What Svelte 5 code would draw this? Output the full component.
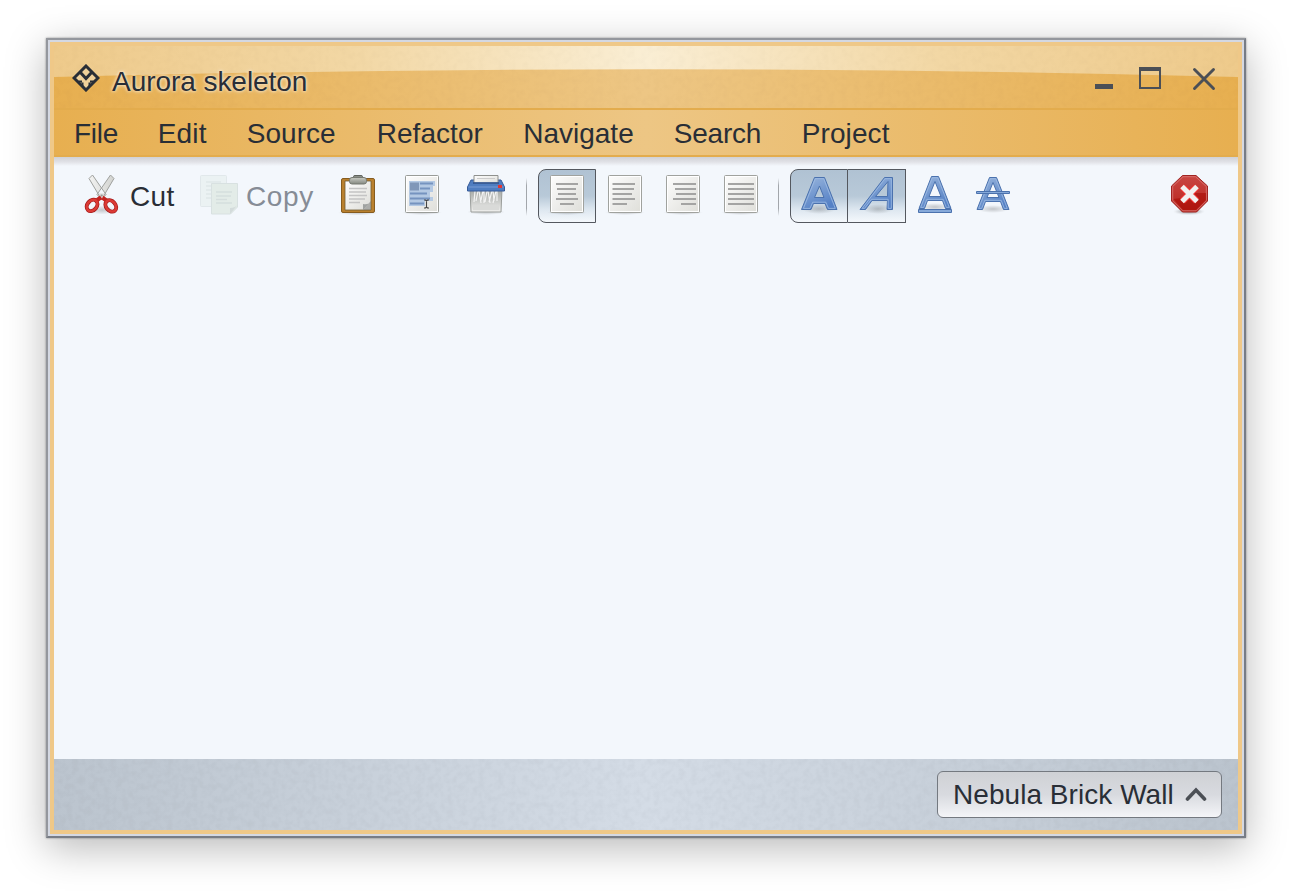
<script>
  const menus = [
    { label: 'File', w: 83.7, ls: -0.3 },
    { label: 'Edit', w: 89, ls: 0.2 },
    { label: 'Source', w: 130, ls: 0.05 },
    { label: 'Refactor', w: 146.5, ls: 0.05 },
    { label: 'Navigate', w: 150.5, ls: 0 },
    { label: 'Search', w: 128, ls: -0.2 },
    { label: 'Project', w: 90, ls: 0.1 }
  ];
  const pages = [
    { on: true, lines: [[12, 34], [13, 32], [14, 32], [12, 34], [16, 30]] },
    { on: false, lines: [[10.5, 33], [10.5, 32], [10.5, 30], [10.5, 33], [10.5, 25]] },
    { on: false, lines: [[13, 36], [15, 36], [16, 36], [13, 36], [21, 36]] },
    { on: false, lines: [[10, 36], [10, 36], [10, 36], [10, 36], [10, 36]] }
  ];
</script>

<svg class="defs" width="0" height="0" aria-hidden="true">
  <defs>
    <linearGradient id="paper" x1="0" y1="0" x2="1" y2="1"><stop offset="0" stop-color="#fdfdfd" /><stop offset="1" stop-color="#deded9" /></linearGradient>
    <linearGradient id="blue" x1="0" y1="0" x2=".5" y2="1"><stop offset="0" stop-color="#9ab6dc" /><stop offset="1" stop-color="#5581c6" /></linearGradient>
    <radialGradient id="shade"><stop offset="0" stop-color="#000" stop-opacity=".2" /><stop offset="1" stop-color="#000" stop-opacity="0" /></radialGradient>
    <linearGradient id="red" x1="0" y1="0" x2="0" y2="1"><stop offset="0" stop-color="#c94743" /><stop offset="1" stop-color="#b8241c" /></linearGradient>
    <linearGradient id="blade" x1="0" y1="0" x2="1" y2="0"><stop offset="0" stop-color="#f3f3f2" /><stop offset="1" stop-color="#d2d3d0" /></linearGradient>
    <linearGradient id="metal" x1="0" y1="0" x2="0" y2="1"><stop offset="0" stop-color="#c9cbc4" /><stop offset="1" stop-color="#858981" /></linearGradient>
    <linearGradient id="bin" x1="0" y1="0" x2="0" y2="1"><stop offset="0" stop-color="#a2a5a2" /><stop offset="1" stop-color="#f0f0ee" /></linearGradient>
    <linearGradient id="shine" x1="0" y1="0" x2="1" y2="0">
      <stop offset="0" stop-color="#eeca8b" /><stop offset=".25" stop-color="#f2d7a4" /><stop offset=".5" stop-color="#faeed4" /><stop offset=".75" stop-color="#f2d7a4" /><stop offset="1" stop-color="#eeca8b" />
    </linearGradient>
    <filter id="grain" x="0" y="0" width="100%" height="100%">
      <feTurbulence type="fractalNoise" baseFrequency=".16" numOctaves="2" seed="4" />
      <feColorMatrix values="0 0 0 0 0  0 0 0 0 0  0 0 0 0 0  .5 0 0 0 -.17" />
    </filter>
  </defs>
</svg>

<div class="desk">
  <div class="window">
    <header class="title">
      <svg class="arc" viewBox="0 0 1184 62" width="1184" height="62"><path d="M0 0H1184V31Q592 15.500 0 31Z" fill="url(#shine)" /><rect width="1184" height="62" filter="url(#grain)" opacity=".06" /></svg>
      <svg class="logo" viewBox="0 0 28 28" width="28" height="28" fill="none" stroke="#292e36">
        <path d="M14 2 26 14 14 26 2 14Z" fill="#efd09a" stroke-width="3" />
        <path d="M8 8 14 14.500 20 8" stroke-width="3" />
        <path d="M6.500 17.500H10M21.500 17.500H18M10.500 22V18.500M17.500 22V18.500" stroke-width="2" />
      </svg>
      <h1>Aurora skeleton</h1>
      <svg class="controls" viewBox="0 0 124 28" width="124" height="28" fill="none" stroke="#4b4f56">
        <path d="M0 19.500H18" stroke-width="5" />
        <path d="M45 3V21H65V3" stroke-width="2" /><path d="M44 2H66" stroke-width="4" />
        <path d="M99.500 2.500 118.500 21.500M118.500 2.500 99.500 21.500" stroke-width="2.900" stroke-linecap="round" />
      </svg>
    </header>
    <nav>
      {#each menus as m}
        <span style="width:{m.w}px;letter-spacing:{m.ls}px">{m.label}</span>
      {/each}
    </nav>
    <main>
      <div class="toolbar">
        <button class="cut">
          <svg viewBox="0 0 36 42" width="36" height="42">
            <ellipse cx="18" cy="36" rx="13" ry="4.500" fill="url(#shade)" />
            <path d="M30 4.500 26.500 1 13 20.500l4.500 5Z M5 4.500 8.500 1 22 20.500l-4.500 5Z" fill="url(#blade)" stroke="#9fa19e" />
            <ellipse cx="7.700" cy="31.500" rx="4.700" ry="6.200" transform="rotate(40 8 32)" fill="none" stroke="#a31a1a" stroke-width="4" />
            <ellipse cx="27" cy="31.500" rx="4.700" ry="6.200" transform="rotate(-40 27.500 32)" fill="none" stroke="#a31a1a" stroke-width="4" />
            <path d="M12.500 26.500l5-3.500 5 3.500" fill="none" stroke="#c42522" stroke-width="4" />
            <ellipse cx="7.700" cy="31.500" rx="4.700" ry="6.200" transform="rotate(40 8 32)" fill="none" stroke="#dc3b36" stroke-width="2.500" />
            <ellipse cx="27" cy="31.500" rx="4.700" ry="6.200" transform="rotate(-40 27.500 32)" fill="none" stroke="#dc3b36" stroke-width="2.500" />
            <path d="M14.500 19.500h6L18 24.500Z" fill="#d9dad8" />
            <circle cx="17.700" cy="21.500" r="1.100" fill="#999" />
          </svg>
          <span>Cut</span>
        </button>
        <button class="copy">
          <svg viewBox="0 0 40 42" width="40" height="42">
            <rect x="1.500" y="1.500" width="26" height="31" rx="1" fill="#ebf2f3" stroke="#e1e8eb" />
            <path d="M7 8h15M7 12h14M7 16h9M7 20h5M7 24h5" stroke="#dfe7e9" stroke-width="1.400" />
            <path d="M12.500 9.500H38.500V33l-7 7H12.500Z" fill="#e3ece8" stroke="#d8e1e1" />
            <path d="M17 18h16M17 22h15M17 25.500h11M17 29h16" stroke="#d5dedd" stroke-width="1.300" />
            <path d="M31 40V34q5 0 7.500-3Z" fill="#d3dbdb" />
          </svg>
          <span>Copy</span>
        </button>
        <svg class="paste" viewBox="0 0 40 44" width="40" height="44">
          <ellipse cx="20" cy="38.500" rx="20" ry="3" fill="url(#shade)" />
          <rect x="3.500" y="4.500" width="33" height="34" rx="1.500" fill="#b9802e" stroke="#865c1f" />
          <path d="M7 7H33V36H7Z" fill="url(#paper)" stroke="#6e5a34" stroke-width=".8" />
          <path d="M11 14.500h18M11 18h17M11 21.500h18M11 25h16M11 28.500h11" stroke="#c4c4c4" stroke-width="1.400" />
          <path d="M25 36V30q6 1 8-3Z" fill="#a0a3a1" />
          <path d="M25 36 33 27v9Z" fill="#777a77" opacity=".5" />
          <path d="M15.500 5V2.500q0-1 1.500-1h6q1.500 0 1.500 1V5" fill="#8b8f88" stroke="#5f635d" />
          <rect x="11.500" y="3.500" width="17" height="6.500" rx="2.500" fill="url(#metal)" stroke="#777b73" />
        </svg>
        <svg class="select" viewBox="0 0 40 44" width="40" height="44">
          <ellipse cx="20" cy="38.500" rx="20" ry="2.500" fill="url(#shade)" />
          <rect x="3.500" y="1.500" width="33" height="37" rx="1" fill="url(#paper)" stroke="#999c98" />
          <rect x="4.500" y="2.500" width="31" height="35" fill="none" stroke="#fff" />
          <path d="M7 7H33v5H31v6H28v5h3v4H23v5H7Z" fill="#b4c9e3" />
          <path d="M8 8.500h9v8H8Z" fill="#8097b8" />
          <path d="M18 9.500h13M18 14.500h10M8 19.500h17M8 24.500h20M8 29.500h14" stroke="#7593bf" stroke-width="1.800" />
          <path d="M22 26h1.500l1 1 1-1H27M24.500 26.500v7M22 34h1.500l1-1 1 1H27" fill="none" stroke="#444" stroke-width="1.100" />
        </svg>
        <svg class="delete" viewBox="0 0 40 44" width="40" height="44">
          <ellipse cx="20" cy="38" rx="19" ry="3" fill="url(#shade)" />
          <path d="M4 15H36L35 38H5Z" fill="url(#bin)" stroke="#9a9d9a" />
          <path d="M7 31H33V36H7Z" fill="#d9dad8" />
          <path d="M9 17l-1 11M12 17l-2 10M13 17l2 12M17 17l-2 9M18 17v12M21 17l-2 11M22 17l2 12M26 17l-3 11M27 17l1 10M30 17l-3 12M31 17v10" fill="none" stroke="#f3f3f3" stroke-width="1.200" />
          <path d="M5 6H35L38.500 13v4H1.500V13Z" fill="#4f7dc0" stroke="#365b98" />
          <path d="M2.500 13H37.500" stroke="#6a92ce" stroke-width="1.500" />
          <path d="M8 1.500H32V9H8Z" fill="url(#paper)" stroke="#8f918e" />
          <path d="M11 4.500h18" stroke="#ccc" />
          <path d="M7 9H33" stroke="#294f91" stroke-width="1.500" />
          <path d="M32 11h4v3h-4Z" fill="#e33532" />
        </svg>
        <i class="sep"></i>
        {#each pages as p, n}
          <span class="tool page" class:on={p.on} class:first={n === 0}>
            <svg viewBox="0 0 46 44" width="46" height="44">
              <ellipse cx="23" cy="38.500" rx="20" ry="2.500" fill="url(#shade)" />
              <rect x="6.500" y="1.500" width="33" height="37" rx="1" fill="url(#paper)" stroke="#a0a29e" />
              <rect x="7.500" y="2.500" width="31" height="35" fill="none" stroke="#fff" />
              {#each p.lines as l, i}
                <path d="M{l[0]} {10 + i * 5}H{l[1]}" stroke="#a4a4a3" stroke-width="2" />
              {/each}
            </svg>
          </span>
        {/each}
        <i class="sep second"></i>
        <span class="tool on first">
          <svg viewBox="0 0 46 44" width="46" height="44">
            <ellipse cx="23" cy="34" rx="17" ry="5" fill="url(#shade)" />
            <path fill-rule="evenodd" d="M18.500 2.500H28.500L41 34.500H31.500L29 28.500H17.500L15 34.500H5.500Z M23.500 11 18.500 22.500H28Z" fill="url(#blue)" stroke="#4b72ae" />
            <path d="M19.300 3.700H27.700L39.300 33.400H32.500L29.800 27.200H16.700L14 33.400H7.400Z" fill="none" stroke="#9fbce3" stroke-width=".8" />
          </svg>
        </span>
        <span class="tool on joined">
          <svg viewBox="0 0 46 44" width="46" height="44">
            <ellipse cx="24" cy="34" rx="15" ry="5" fill="url(#shade)" />
            <path fill-rule="evenodd" d="M30.500 2.500H38.500V34.500H33L33.500 25.500H18L11.500 34.500H6Z M34 6.500 21.500 21.500H33.500Z" fill="url(#blue)" stroke="#4b72ae" />
            <path d="M31 3.700H37.300V33.400H34.200V24.300H17.500L10.500 33.400H8.200Z" fill="none" stroke="#9fbce3" stroke-width=".8" />
          </svg>
        </span>
        <span class="tool">
          <svg viewBox="0 0 46 44" width="46" height="44">
            <ellipse cx="23" cy="32" rx="16" ry="4" fill="url(#shade)" />
            <path fill-rule="evenodd" d="M19.500 1.500H26.500L39 33.500H33.500L30.500 25.500H15.500L12.500 33.500H7Z M23 6.500 17 21.500H29Z" fill="url(#blue)" stroke="#4b72ae" />
            <path d="M20.300 2.700H25.700L37.300 32.400H34.300L31.200 24.300H14.800L11.700 32.400H8.700Z" fill="none" stroke="#9fbce3" stroke-width=".8" />
            <path d="M6.500 34.500H39.500V37.500H6.500Z" fill="#86a9d9" stroke="#4b72ae" />
          </svg>
        </span>
        <span class="tool">
          <svg viewBox="0 0 46 44" width="46" height="44">
            <ellipse cx="23" cy="34" rx="16" ry="4" fill="url(#shade)" />
            <path fill-rule="evenodd" d="M19.500 2.500H26.500L39 34.500H33.500L30.500 26.500H15.500L12.500 34.500H7Z M23 7.500 17 22.500H29Z" fill="url(#blue)" stroke="#4b72ae" />
            <path d="M20.300 3.700H25.700L37.300 33.400H34.300L31.200 25.300H14.800L11.700 33.400H8.700Z" fill="none" stroke="#9fbce3" stroke-width=".8" />
            <path d="M6.500 16.500H39.500V18.500H6.500Z" fill="#86a9d9" stroke="#4b72ae" />
          </svg>
        </span>
        <svg class="exit" viewBox="0 0 40 44" width="40" height="44">
          <ellipse cx="20" cy="37.500" rx="16" ry="4" fill="url(#shade)" /><ellipse cx="20" cy="37.500" rx="14" ry="3" fill="url(#shade)" />
          <path d="M13.500 1.500H27L38.500 12V27L27.500 38H13.500L2.500 27V12Z" fill="url(#red)" stroke="#a02422" />
          <path d="M14 2.700H26.500L37.300 12.500V26.500L27 36.800H14L3.700 26.500V12.500Z" fill="none" stroke="#d97470" stroke-width=".9" />
          <path d="M4.500 25Q17 24 25 19L37 19V26L27 36H14Z" fill="#a80b05" opacity=".6" />
          <path d="M13.500 13 27.500 27M27.500 13 13.500 27" stroke="#ef3431" stroke-width="7" />
          <path d="M13 12.500 28 27.500M28 12.500 13 27.500" stroke="#f1f1f0" stroke-width="5" />
        </svg>
      </div>
    </main>
    <footer>
      <svg class="texture" width="1184" height="71"><rect width="1184" height="71" filter="url(#grain)" opacity=".1" /></svg>
      <button class="skin"><span>Nebula Brick Wall</span>
        <svg viewBox="0 0 22 16" width="22" height="16"><path d="M2.500 12 11 3l8.500 9" fill="none" stroke="#4b4f55" stroke-width="3.600" stroke-linecap="round" /></svg>
      </button>
    </footer>
  </div>
</div>

<style>
  :global(body) { margin: 0; background: #fff; overflow: hidden; }
  .defs { position: absolute; }
  .desk { width: 1292px; height: 892px; box-sizing: border-box; padding: 38px 46px 54px; font: 28px "Liberation Sans", Arial, sans-serif; color: #292e36; background: #fff; }
  .window { width: 1200px; height: 800px; box-sizing: border-box; border: 2px solid; border-color: #94979d #777c85 #777c85 #94979d; box-shadow: inset 0 0 0 2px #d4d8e2, inset 0 0 0 6px #efc888, 0 0 2px rgba(0,0,0,.4), 0 10px 38px rgba(0,0,0,.28); padding: 6px; display: flex; flex-direction: column; }
  .title { position: relative; height: 62px; display: flex; align-items: center; background: linear-gradient(90deg, #e7af50, #edc684 50%, #e7af50); }
  .arc, .texture { position: absolute; inset: 0; }
  .logo { position: relative; margin: 2px 0 0 18px; }
  h1 { position: relative; font: inherit; margin: 9px 0 0 12px; letter-spacing: -.05px; text-shadow: 0 0 4px #fffa, 0 0 3px #fffa; white-space: nowrap; }
  .controls { position: relative; margin: 8px 19px 0 auto; }
  nav { height: 49px; box-sizing: border-box; border-top: 2px solid #e3ac4d; border-bottom: 2px solid #e3ac4d; display: flex; align-items: center; padding: 2px 0 0 20px; background: linear-gradient(90deg, #e7af50, #edc684 50%, #e7af50); }
  nav span { flex: none; white-space: nowrap; }
  main { flex: 1; background: linear-gradient(#d0d1d6, #e1e2e7 5px, #f3f7fc 9px); }
  .toolbar { height: 78px; box-sizing: border-box; padding-top: 12px; display: flex; align-items: flex-start; }
  svg { display: block; flex: none; }
  button { font: inherit; color: inherit; background: none; border: 0; padding: 0; display: flex; flex: none; white-space: nowrap; }
  .cut { margin: 5px 0 0 30px; width: 115px; gap: 10px; letter-spacing: .3px; }
  .copy { margin-top: 5px; width: 139px; gap: 7px; color: #868c96; letter-spacing: .6px; }
  button span { line-height: 32px; padding-top: 7px; }
  .paste, .select, .delete { margin-top: 5px; }
  .select, .delete { margin-left: 24px; }
  .sep { width: 1px; height: 38px; margin: 9px 11px 0 20px; flex: none; background: linear-gradient(transparent, #a2a6ab 20%, #a2a6ab 80%, transparent); }
  .sep.second { margin: 9px 11px 0 8px; }
  .tool { flex: none; width: 58px; height: 54px; box-sizing: border-box; padding: 5px 5px 0; border: 1px solid transparent; }
  .page { padding-top: 4px; }
  .tool.on { background: linear-gradient(#b0c2d3, #b8c9d8 50%, #dce6ef 75%, #f4f8fc); border-color: #54585f; }
  .tool.on.first { border-radius: 8px 0 0 8px; }
  .tool.joined { border-left-width: 0; padding-left: 6px; }
  .exit { margin: 5px 29px 0 auto; }
  footer { position: relative; height: 71px; display: flex; align-items: center; justify-content: flex-end; padding-right: 16px; background: linear-gradient(90deg, #bbc4ce, #d4dce6 50%, #bbc4ce); box-sizing: border-box; }
  .skin { position: relative; width: 285px; height: 47px; box-sizing: border-box; border: 1px solid #747980; border-radius: 6px; background: linear-gradient(#cfd1d5, #d8dadf 50%, #f4f5f8); align-items: center; padding: 0 14px 0 15px; justify-content: space-between; letter-spacing: .05px; }
  .skin span { padding: 0; }
</style>
